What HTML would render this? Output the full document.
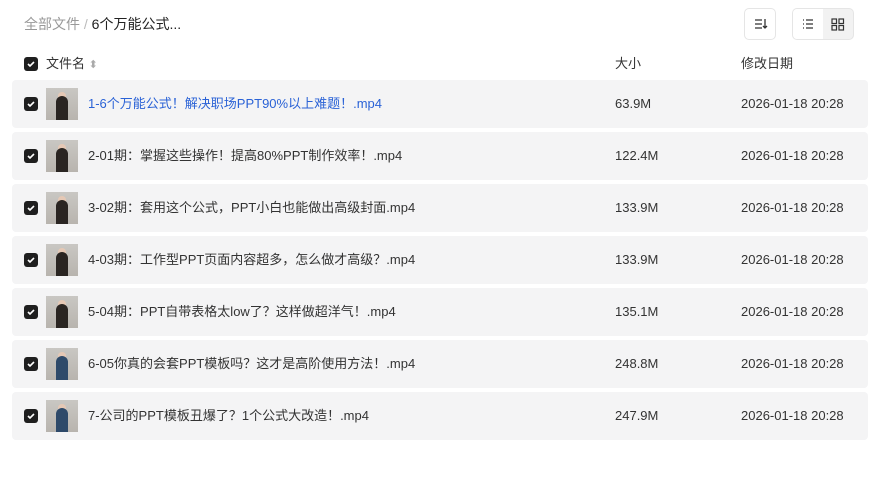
<!DOCTYPE html>
<html><head><meta charset="utf-8"><style>
body{margin:0;width:878px;height:495px;background:#fff;font-family:"Liberation Sans","Noto Sans CJK SC",sans-serif;position:relative;overflow:hidden}
.abs{position:absolute;line-height:20px}
.cb{position:absolute;width:14px;height:14px;background:#1f1f1f;border-radius:3px}
.cb svg{position:absolute;left:2px;top:2px}
.row{position:absolute;left:12px;width:856px;height:48px;background:#f4f4f5;border-radius:4px;font-size:13px;color:#333;line-height:48px}
.row .cb{left:12px;top:17px}
.th{position:absolute;left:34px;top:8px;width:32px;height:32px;background:linear-gradient(#c9c7c3,#b8b4ae)}
.th i{position:absolute;left:10px;top:8px;width:12px;height:24px;background:#2a2522;border-radius:6px 6px 0 0}
.th b{position:absolute;left:12px;top:4px;width:8px;height:9px;background:#e5c8b5;border-radius:4px}
.nm{position:absolute;left:76px;top:0}
.sz{position:absolute;left:603px;top:0}
.dt{position:absolute;left:729px;top:0}
</style></head><body>
<div class="abs" style="left:24px;top:14px;font-size:14px;color:#999">全部文件 <span style="color:#bbb">/</span> <span style="color:#222">6个万能公式...</span></div>
<div class="abs" style="left:744px;top:8px;width:30px;height:30px;border:1px solid #e5e5e5;border-radius:5px"><svg width="30" height="30"><path d="M10 11h7M10 15h7M10 19h7M20 10v9M18 17l2 2 2-2" stroke="#333" stroke-width="1.3" fill="none"/></svg></div>
<div class="abs" style="left:792px;top:8px;width:60px;height:30px;border:1px solid #e5e5e5;border-radius:5px;background:#f2f2f2;overflow:hidden"><div style="position:absolute;left:0;top:0;width:30px;height:30px;background:#fff"><svg width="30" height="30"><path d="M10 11h1M13 11h7M10 15h1M13 15h7M10 19h1M13 19h7" stroke="#333" stroke-width="1.3"/></svg></div><svg width="30" height="30" style="position:absolute;left:30px"><rect x="9" y="10" width="4.5" height="4.5" stroke="#333" fill="none" stroke-width="1.2"/><rect x="16" y="10" width="4.5" height="4.5" stroke="#333" fill="none" stroke-width="1.2"/><rect x="9" y="16.5" width="4.5" height="4.5" stroke="#333" fill="none" stroke-width="1.2"/><rect x="16" y="16.5" width="4.5" height="4.5" stroke="#333" fill="none" stroke-width="1.2"/></svg></div>
<div class="cb" style="left:24px;top:57px"><svg width="10" height="10"><path d="M2 5l2 2 4-4" stroke="#fff" stroke-width="1.6" fill="none"/></svg></div>
<div class="abs" style="left:46px;top:54px;font-size:13px;color:#333">文件名 <span style="color:#aaa;font-size:11px">⬍</span></div>
<div class="abs" style="left:615px;top:54px;font-size:13px;color:#333">大小</div>
<div class="abs" style="left:741px;top:54px;font-size:13px;color:#333">修改日期</div>

<div class="row" style="top:80px"><div class="cb"><svg width="10" height="10"><path d="M2 5l2 2 4-4" stroke="#fff" stroke-width="1.6" fill="none"/></svg></div><div class="th"><b></b><i></i></div><div class="nm" style="color:#2a62d6">1-6个万能公式！解决职场PPT90%以上难题！.mp4</div><div class="sz">63.9M</div><div class="dt">2026-01-18 20:28</div></div>
<div class="row" style="top:132px"><div class="cb"><svg width="10" height="10"><path d="M2 5l2 2 4-4" stroke="#fff" stroke-width="1.6" fill="none"/></svg></div><div class="th"><b></b><i></i></div><div class="nm">2-01期：掌握这些操作！提高80%PPT制作效率！.mp4</div><div class="sz">122.4M</div><div class="dt">2026-01-18 20:28</div></div>
<div class="row" style="top:184px"><div class="cb"><svg width="10" height="10"><path d="M2 5l2 2 4-4" stroke="#fff" stroke-width="1.6" fill="none"/></svg></div><div class="th"><b></b><i></i></div><div class="nm">3-02期：套用这个公式，PPT小白也能做出高级封面.mp4</div><div class="sz">133.9M</div><div class="dt">2026-01-18 20:28</div></div>
<div class="row" style="top:236px"><div class="cb"><svg width="10" height="10"><path d="M2 5l2 2 4-4" stroke="#fff" stroke-width="1.6" fill="none"/></svg></div><div class="th"><b></b><i></i></div><div class="nm">4-03期：工作型PPT页面内容超多，怎么做才高级？.mp4</div><div class="sz">133.9M</div><div class="dt">2026-01-18 20:28</div></div>
<div class="row" style="top:288px"><div class="cb"><svg width="10" height="10"><path d="M2 5l2 2 4-4" stroke="#fff" stroke-width="1.6" fill="none"/></svg></div><div class="th"><b></b><i></i></div><div class="nm">5-04期：PPT自带表格太low了？这样做超洋气！.mp4</div><div class="sz">135.1M</div><div class="dt">2026-01-18 20:28</div></div>
<div class="row" style="top:340px"><div class="cb"><svg width="10" height="10"><path d="M2 5l2 2 4-4" stroke="#fff" stroke-width="1.6" fill="none"/></svg></div><div class="th"><b></b><i style="background:#2e4a6a"></i></div><div class="nm">6-05你真的会套PPT模板吗？这才是高阶使用方法！.mp4</div><div class="sz">248.8M</div><div class="dt">2026-01-18 20:28</div></div>
<div class="row" style="top:392px"><div class="cb"><svg width="10" height="10"><path d="M2 5l2 2 4-4" stroke="#fff" stroke-width="1.6" fill="none"/></svg></div><div class="th"><b></b><i style="background:#2e4a6a"></i></div><div class="nm">7-公司的PPT模板丑爆了？1个公式大改造！.mp4</div><div class="sz">247.9M</div><div class="dt">2026-01-18 20:28</div></div>
</body></html>
